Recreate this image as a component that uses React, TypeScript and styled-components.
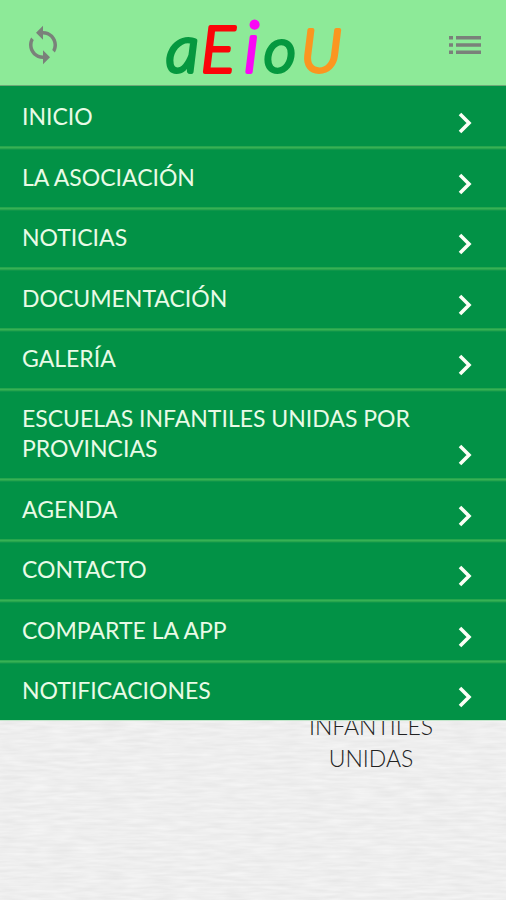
import React from "react";
import styled, { createGlobalStyle } from "styled-components";

const GlobalStyle = createGlobalStyle`
  * { box-sizing: border-box; }
  html, body { margin: 0; }
  body {
    background: #eeeeee;
    font-family: Lato, "Open Sans", sans-serif;
  }
`;

const Page = styled.div`
  position: relative;
  min-height: 100vh;
  overflow: hidden;
  background: #eeeeee;
`;

const Paper = styled.svg`
  position: absolute;
  inset: 0;
  width: 100%;
  height: 100%;
`;

const Header = styled.header`
  position: relative;
  display: flex;
  align-items: center;
  justify-content: space-between;
  height: 86px;
  padding: 0 19px 0 21px;
  background: #8dea98;
  border-bottom: 1px solid #6fa877;
`;

const IconButton = styled.button`
  display: flex;
  align-items: center;
  justify-content: center;
  width: 44px;
  height: 44px;
  padding: 0;
  margin-top: 4px;
  border: 0;
  background: none;
  color: #7a817a;
  cursor: pointer;
`;

const Logo = styled.svg`
  display: block;
  width: 190px;
  height: 85px;
  overflow: visible;
  font-family: Lato, sans-serif;
  font-style: italic;
  font-weight: 300;
`;

const Letter = styled.text<{ $color: string; $size: number }>`
  fill: ${(p) => p.$color};
  stroke: ${(p) => p.$color};
  stroke-width: 4px;
  stroke-linejoin: round;
  font-size: ${(p) => p.$size}px;
`;

const Body = styled.div`
  position: relative;
`;

const Menu = styled.nav`
  position: absolute;
  top: 0;
  left: 0;
  right: 0;
  z-index: 1;
  display: flex;
  flex-direction: column;
  min-height: calc(80vh - 86px);
  background: #029246;
  box-shadow: 0 1px 0 #c3e6cb;
`;

const MenuItem = styled.a`
  flex: 1 0 auto;
  display: flex;
  align-items: flex-end;
  justify-content: space-between;
  padding: 15px 29px 11px 22px;
  color: #e9fbe6;
  font-size: 23px;
  line-height: 30px;
  text-decoration: none;

  & + & {
    background: linear-gradient(#27a64d 0 1px, #37b155 1px 2px, #27a64d 2px 3px, #0f964a 3px 4px, transparent 4px);
  }
`;

const MenuLabel = styled.span`
  flex: 1;
  padding: 0 24px 4px 0;
`;

const Tiles = styled.main`
  display: grid;
  grid-template-columns: 1fr 1fr;
  padding: 592px 14px 0 8px;
`;

const TileLabel = styled.p`
  grid-column: 2;
  justify-self: center;
  width: 136px;
  margin: 0;
  color: #222222;
  font-size: 23px;
  font-weight: 300;
  line-height: 32px;
  text-align: center;
`;

const entries = [
  "INICIO",
  "LA ASOCIACIÓN",
  "NOTICIAS",
  "DOCUMENTACIÓN",
  "GALERÍA",
  "ESCUELAS INFANTILES UNIDAS POR PROVINCIAS",
  "AGENDA",
  "CONTACTO",
  "COMPARTE LA APP",
  "NOTIFICACIONES",
];

const letters = [
  { char: "a", x: 7, size: 66, color: "#05983f" },
  { char: "E", x: 42, size: 63, color: "#fb0509" },
  { char: "i", x: 85, size: 72, color: "#f908f5" },
  { char: "o", x: 105, size: 62, color: "#05983f" },
  { char: "U", x: 142, size: 60, color: "#fb9620" },
];

function PaperTexture() {
  return (
    <Paper aria-hidden="true">
      <filter id="paper" x="0" y="0" width="100%" height="100%" colorInterpolationFilters="sRGB">
        <feTurbulence type="fractalNoise" baseFrequency="0.04 0.3" numOctaves="2" seed="8" />
        <feColorMatrix values="0.07 0 0 0 0.899  0.07 0 0 0 0.899  0.07 0 0 0 0.899  0 0 0 0 1" />
      </filter>
      <rect width="100%" height="100%" filter="url(#paper)" />
    </Paper>
  );
}

function Chevron() {
  return (
    <svg width="24" height="24" viewBox="0 0 24 24" fill="none" stroke="#fbfff5" strokeWidth="3.6" aria-hidden="true">
      <path d="M7 3 16 12l-9 9" />
    </svg>
  );
}

export default function App() {
  return (
    <Page>
      <GlobalStyle />
      <PaperTexture />
      <Header>
        <IconButton aria-label="Actualizar">
          <svg width="42" height="42" viewBox="0 0 24 24" fill="currentColor" aria-hidden="true">
            <path d="M12 4V1L8 5l4 4V6c3.31 0 6 2.69 6 6 0 1.01-.25 1.97-.7 2.8l1.46 1.46C19.54 15.03 20 13.57 20 12c0-4.42-3.58-8-8-8zm0 14c-3.31 0-6-2.69-6-6 0-1.01.25-1.97.7-2.8L5.24 7.74C4.46 8.97 4 10.43 4 12c0 4.42 3.58 8 8 8v3l4-4-4-4v3z" />
          </svg>
        </IconButton>
        <Logo viewBox="0 0 190 85" role="img" aria-label="aEioU">
          {letters.map((l) => (
            <Letter key={l.char} x={l.x} y={72} $color={l.color} $size={l.size}>
              {l.char}
            </Letter>
          ))}
        </Logo>
        <IconButton aria-label="Menú">
          <svg width="32" height="18" viewBox="0 0 32 18" fill="currentColor" aria-hidden="true">
            <path d="M0 0h4v3.6H0zM0 7.2h4v3.6H0zM0 14.4h4V18H0zM7 0h25v3.6H7zM7 7.2h25v3.6H7zM7 14.4h25V18H7z" />
          </svg>
        </IconButton>
      </Header>
      <Body>
        <Menu>
          {entries.map((label) => (
            <MenuItem key={label} href="#">
              <MenuLabel>{label}</MenuLabel>
              <Chevron />
            </MenuItem>
          ))}
        </Menu>
        <Tiles>
          <TileLabel>ESCUELAS INFANTILES UNIDAS</TileLabel>
        </Tiles>
      </Body>
    </Page>
  );
}
